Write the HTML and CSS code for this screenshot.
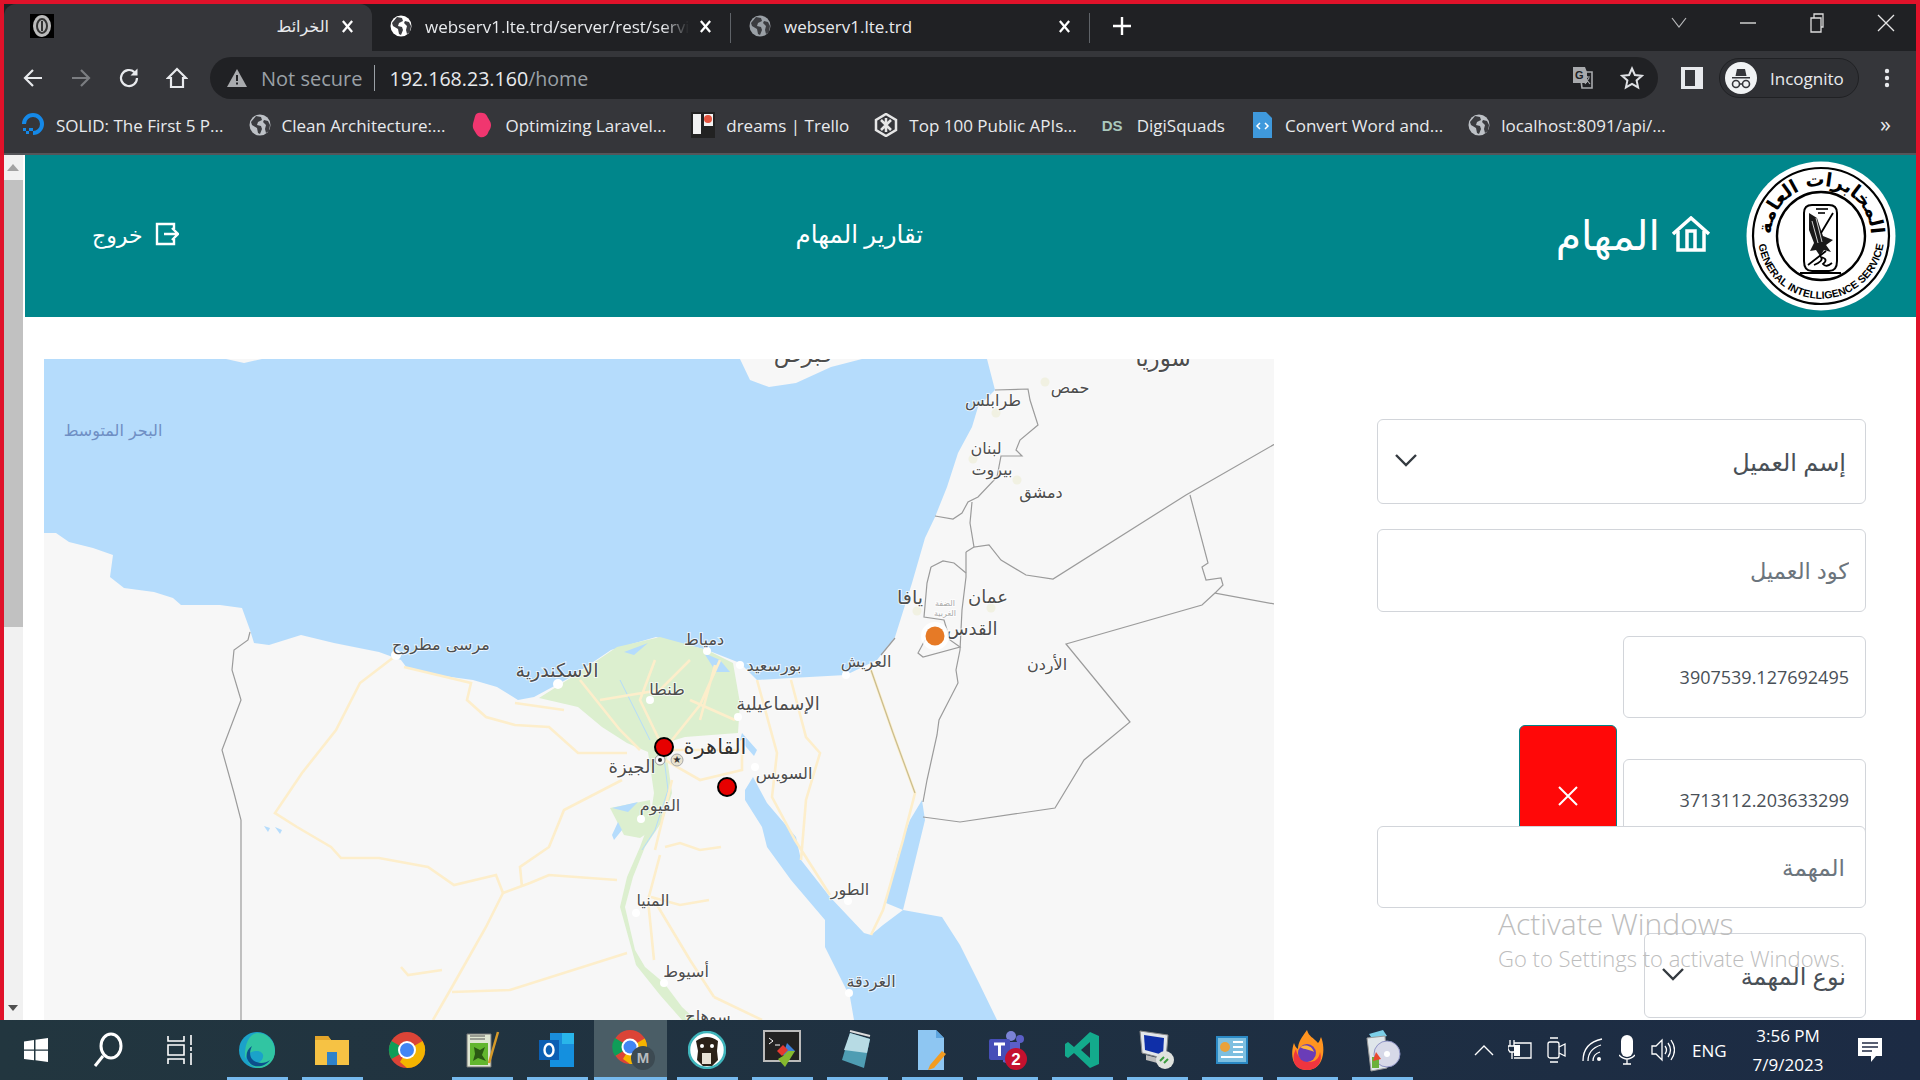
FILE: index.html
```html
<!DOCTYPE html>
<html lang="ar">
<head>
    <meta charset="utf-8">
    <title>الخرائط</title>
    <link rel="stylesheet" href="styles.css">
</head>
<body>
<svg class="defs" width="0" height="0">
    <symbol id="globe" viewBox="0 0 22 22">
        <circle cx="11" cy="11" r="10.5" fill="currentColor"/>
        <path d="M7 2l5 1 1 3-4 2-1 3 4 1 1 3-2 5-2-1-1-5-5-3-1-3zM15 6l4 1 2 4-1 6-3 2-1-4 1-4-3-3z" fill="#3b3c40"/>
    </symbol>
</svg>

<div class="tabstrip">
    <div class="tab active">
        <div class="tab-fav">
            <svg width="24" height="24" viewBox="0 0 24 24"><rect width="24" height="24" fill="#000"/><ellipse cx="12" cy="12" rx="9" ry="11" fill="#bbb"/><ellipse cx="12" cy="12" rx="5" ry="7" fill="none" stroke="#333" stroke-width="2"/><path d="M12 7v10" stroke="#333" stroke-width="2"/></svg>
        </div>
        <span class="tab-title rtl">الخرائط</span>
        <svg class="tab-x" viewBox="0 0 14 14"><path d="M2 1l10 12M12 1L2 13"/></svg>
    </div>
    <div class="tab">
        <svg class="tab-globe white"><use href="#globe"/></svg>
        <span class="tab-title fade">webserv1.lte.trd/server/rest/service</span>
        <svg class="tab-x" viewBox="0 0 14 14"><path d="M2 1l10 12M12 1L2 13"/></svg>
    </div>
    <div class="tab-sep"></div>
    <div class="tab">
        <svg class="tab-globe"><use href="#globe"/></svg>
        <span class="tab-title">webserv1.lte.trd</span>
        <svg class="tab-x" viewBox="0 0 14 14"><path d="M2 1l10 12M12 1L2 13"/></svg>
    </div>
    <div class="tab-sep"></div>
    <svg class="newtab" width="20" height="20" viewBox="0 0 20 20"><path d="M10 1v18M1 10h18" stroke="#fff" stroke-width="2.4"/></svg>
    <div class="winctrls">
        <svg width="18" height="12" viewBox="0 0 18 12"><path d="M2 1l7 9 7-9" fill="none" stroke="#b8b9bb" stroke-width="1.2"/></svg>
        <svg width="18" height="12" viewBox="0 0 18 12"><path d="M1 6h16" stroke="#dcdcdc" stroke-width="1.4"/></svg>
        <svg width="18" height="20" viewBox="0 0 18 20"><path d="M3 5h10v14H3zM6 5V1h9v13h-2" fill="none" stroke="#dcdcdc" stroke-width="1.3"/></svg>
        <svg width="18" height="18" viewBox="0 0 18 18"><path d="M1 1l16 16M17 1L1 17" stroke="#e6e6e6" stroke-width="1.3"/></svg>
    </div>
</div>

<div class="toolbar">
    <div class="navbtn"><svg width="22" height="22" viewBox="0 0 22 22"><path d="M20 11H3M11 3l-8 8 8 8" fill="none" stroke="#e8eaed" stroke-width="2.2"/></svg></div>
    <div class="navbtn"><svg width="22" height="22" viewBox="0 0 22 22"><path d="M2 11h17M11 3l8 8-8 8" fill="none" stroke="#7b7d81" stroke-width="2.2"/></svg></div>
    <div class="navbtn"><svg width="24" height="24" viewBox="0 0 24 24"><path d="M20 12a8 8 0 1 1-2.6-5.9" fill="none" stroke="#e8eaed" stroke-width="2.2"/><path d="M20.5 2.5v7h-7z" fill="#e8eaed"/></svg></div>
    <div class="navbtn"><svg width="22" height="24" viewBox="0 0 22 24"><path d="M11 3L2 12h3v9h12v-9h3z" fill="none" stroke="#e8eaed" stroke-width="2.2"/></svg></div>
    <div class="omnibox">
        <svg class="warn" width="20" height="18" viewBox="0 0 20 18"><path d="M10 0l10 18H0z" fill="#a9abae"/><path d="M9 6h2v6H9zM9 13.500h2v2H9z" fill="#202124"/></svg>
        <span class="notsecure">Not secure</span>
        <span class="omni-sep"></span>
        <span class="url">192.168.23.160<span class="url-path">/home</span></span>
        <svg class="translate" width="24" height="24" viewBox="0 0 24 24"><path d="M2 1h12l2 5v11H2z" fill="#a8aaad"/><path d="M9 6h12v16H11z" fill="none" stroke="#a8aaad" stroke-width="1.6"/><text x="4" y="13" class="gtext">G</text><path d="M13 11h6M16 10v2M14 18l4-6M15 13l4 5" stroke="#a8aaad" stroke-width="1.2" fill="none"/></svg>
        <svg class="star" width="24" height="24" viewBox="0 0 24 24"><path d="M12 2.500l2.900 6.500 7 .7-5.300 4.700 1.500 7-6.100-3.600-6.100 3.600 1.500-7-5.300-4.700 7-.7z" fill="none" stroke="#dfe1e5" stroke-width="2"/></svg>
    </div>
    <svg class="panel" width="22" height="22" viewBox="0 0 22 22"><rect width="22" height="22" fill="#e8eaed"/><rect x="4" y="3" width="10" height="16" fill="#35363a"/></svg>
    <div class="incognito">
        <svg width="32" height="32" viewBox="0 0 32 32"><circle cx="16" cy="16" r="16" fill="#f1f3f4"/><path d="M7 15h18v1.500H7zM10.500 14l1.500-7h8l1.500 7z" fill="#35363a"/><circle cx="11" cy="22" r="3.500" fill="none" stroke="#35363a" stroke-width="1.600"/><circle cx="21" cy="22" r="3.500" fill="none" stroke="#35363a" stroke-width="1.600"/><path d="M14.500 22h3" stroke="#35363a" stroke-width="1.500"/></svg>
        <span>Incognito</span>
    </div>
    <svg class="dots" width="6" height="20" viewBox="0 0 6 20"><circle cx="3" cy="3" r="2.200" fill="#e8eaed"/><circle cx="3" cy="10" r="2.200" fill="#e8eaed"/><circle cx="3" cy="17" r="2.200" fill="#e8eaed"/></svg>
</div>

<div class="bookmarks">
    <div class="bm"><svg width="24" height="24" viewBox="0 0 24 24"><path d="M12 22v-4a7 7 0 1 0-7-7H1a11 11 0 1 1 11 11z" fill="#1589e8"/><path d="M8 15h4v3H8zM5 18h3v3H5zM2 15h3v3H2z" fill="#1589e8"/></svg><span>SOLID: The First 5 P...</span></div>
    <div class="bm"><svg class="bm-globe"><use href="#globe"/></svg><span>Clean Architecture:...</span></div>
    <div class="bm"><svg width="24" height="26" viewBox="0 0 24 26"><path d="M8 1c4-1 8 0 9 3s4 5 4 9-2 5-3 8-5 5-8 4-4-4-6-7-1-7 0-10 1-6 4-7z" fill="#f0366f"/></svg><span>Optimizing Laravel...</span></div>
    <div class="bm"><svg width="24" height="26" viewBox="0 0 24 26"><rect width="24" height="26" fill="#222"/><rect x="2" y="2" width="8" height="20" fill="#f2f2f2"/><rect x="13" y="2" width="9" height="12" fill="#f2f2f2"/><circle cx="17" cy="7" r="4" fill="#e3543f"/></svg><span>dreams | Trello</span></div>
    <div class="bm"><svg width="24" height="24" viewBox="0 0 24 24"><path d="M12 1l10 6v10l-10 6L2 17V7z" fill="none" stroke="#e6e6e6" stroke-width="2.500"/><path d="M7 7l10 10M17 7L7 17M12 5v14" stroke="#e6e6e6" stroke-width="2.500"/></svg><span>Top 100 Public APIs...</span></div>
    <div class="bm"><span class="ds">DS</span><span>DigiSquads</span></div>
    <div class="bm"><svg width="24" height="26" viewBox="0 0 24 26"><path d="M3 0h13l6 6v20H3z" fill="#3f99dc"/><path d="M10 11l-3 3 3 3M15 11l3 3-3 3" fill="none" stroke="#fff" stroke-width="1.500"/></svg><span>Convert Word and...</span></div>
    <div class="bm"><svg class="bm-globe"><use href="#globe"/></svg><span>localhost:8091/api/...</span></div>
    <span class="bm-more">»</span>
</div>

<div class="page">
    <div class="scrollbar">
        <div class="scroll-up"></div>
        <div class="scroll-thumb"></div>
        <div class="scroll-down"></div>
    </div>
    <div class="content">
        <header class="topnav">
            <a class="logout"><span>خروج</span>
                <svg width="24" height="24" viewBox="0 0 24 24"><path d="M19 7V2H2v20h17v-5M9 12h14M17 6l6 6-6 6" fill="none" stroke="#fff" stroke-width="2.400"/></svg>
            </a>
            <a class="reports">تقارير المهام</a>
            <a class="tasks"><span>المهام</span>
                <svg width="38" height="36" viewBox="0 0 38 36"><path d="M1 18L19 2l18 16" fill="none" stroke="#fff" stroke-width="3.500"/><path d="M6 15v19h26V15M15 34V15h8v19" fill="none" stroke="#fff" stroke-width="3.500"/></svg>
            </a>
            <svg class="logo" width="150" height="150" viewBox="0 0 150 150">
                <defs>
                    <path id="arcbottom" d="M14.100 58.700A63 63 0 1 0 135.900 58.700"/>
                    <path id="arctop" d="M28 92A50 50 0 1 1 122 92"/>
                </defs>
                <circle cx="75" cy="75" r="74.500" fill="#fff"/>
                <circle cx="75" cy="75" r="68" fill="none" stroke="#000" stroke-width="2.200"/>
                <circle cx="75" cy="75" r="44" fill="none" stroke="#000" stroke-width="2.400"/>
                <text class="logo-en"><textPath href="#arcbottom" startOffset="50%" text-anchor="middle">GENERAL INTELLIGENCE SERVICE</textPath></text>
                <text class="logo-ar" direction="rtl"><textPath href="#arctop" startOffset="50%" text-anchor="middle">المخابرات العامة</textPath></text>
                <path d="M58 52q0-8 8-8h17q8 0 8 8v48q0 10-8 10H66q-8 0-8-10z" fill="#fff" stroke="#000" stroke-width="2"/>
                <path d="M54 112h41" stroke="#000" stroke-width="2"/>
                <path d="M63 52l8 5 6 18 10 4-7 5 5 7-7-2-4 6-4-6-6 1 4-8-5-13z" fill="#1a1a1a"/>
                <path d="M66 60l6 22M70 57l6 24" stroke="#fff" stroke-width=".8"/>
                <path d="M87 52L75 72M62 104l18-14" stroke="#000" stroke-width="1.800"/>
                <path d="M70 48h12M72 52h7" stroke="#333" stroke-width="2"/>
                <path d="M68 104q10-4 7-8 8 2 2 7 3 4 9-1" fill="none" stroke="#000" stroke-width="1.800"/>
            </svg>
        </header>

        <main class="body-row">
            <div class="map">
                <svg width="1230" height="661" viewBox="44 359 1230 661">
                    <rect x="44" y="359" width="1230" height="661" fill="#f7f7f7"/>
                    <!-- sea -->
                    <path class="water" d="M44 359H226L244 363 262 359H740L750 380 769 387 796 383 831 367 862 359H987L995 390 978 407 972 427 958 453 947 487 935 517 925 538 912 583 895 637 877 660 846 675 791 678 757 680 740 663 707 650 656 637 611 650 571 677 534 697 518 700 497 687 473 680 436 675 407 668 401 660 379 652 334 643 301 635 269 645 254 643 250 630 242 608 220 605 181 605 173 598 154 592 124 588 110 577 113 555 93 548 69 542 56 533 44 533Z"/>
                    <path class="water" d="M753 777L745 790 745 800 762 827 767 847 791 880 825 920 825 947 850 997 854 1020H997L980 985 960 945 942 917 903 910 886 903 898 853 910 820 922 800 925 820 917 853 903 910 883 925 871 935 864 933 830 897 801 860 796 837 767 803Z"/>
                    <!-- delta and nile -->
                    <path class="green" d="M539 698L583 670 617 647 660 637 707 650 733 663 740 703 738 733 685 737 665 743 672 793 663 820 645 847 633 877 625 907 635 950 645 967 664 983 682 1007 696 1020H682L660 995 636 965 620 907 627 877 640 847 650 820 654 793 648 752 627 743 602 727 578 707Z"/>
                    <path class="green" d="M610 808L650 800 652 830 640 838 624 835Z"/>
                    <path class="water" d="M612 808L638 802 628 812ZM612 835L618 822 622 830 614 840ZM624 652L648 643 634 655ZM704 653L720 660 730 672 716 672ZM742 733L757 750 754 756 740 740ZM264 826L270 828 268 832ZM275 827L282 830 280 834Z"/>
                    <path class="nile" d="M620 680L650 740M663 750L668 790 655 830 642 850"/>
                    <!-- roads -->
                    <g class="roads">
                        <path d="M394 657L360 683 336 730 302 773 275 813 297 827 331 847 341 858 379 858 428 867 454 885 496 875 503 893 530 883 549 875 617 880"/>
                        <path d="M404 667L471 683 467 700 486 717 515 725 549 727 578 753 627 753"/>
                        <path d="M515 703L564 710M622 780L564 810 549 847 520 867 522 887"/>
                        <path d="M503 893L486 927 452 987 433 1020M452 992L510 990 627 953M401 967L408 975 442 970"/>
                        <path d="M665 847L680 843 700 850 721 847M651 897L680 905 709 900"/>
                        <path d="M871 670L898 747 915 793 903 840 883 910 871 935M791 680L806 737 820 753 806 800 801 860M757 680L777 753 772 797 795 840 830 895"/>
                        <path d="M714 997L762 1020M654 900L690 960 714 997M660 855L648 900 654 960M672 780L655 850"/>
                        <path d="M664 750L640 700 655 660M664 750L700 705 720 660M580 680L620 730 640 750M665 760L700 780 742 770 742 740M690 700L735 720M665 750H740M600 700L660 690 690 660M715 665L700 720"/>
                    </g>
                    <!-- borders -->
                    <g class="borders">
                        <path d="M995 390L1028 389 1030 400 1038 425 1020 440 1016 450 1022 456 1001 456 997 477 978 497 968 502 962 513 953 519 935 516"/>
                        <path d="M972 502L970 523 974 547 989 545 1001 560 1026 575 1053 579 1186 495 1280 441"/>
                        <path d="M1190 495L1208 563 1202 567 1206 580 1221 578 1223 585 1215 593 1280 605"/>
                        <path d="M1215 593L1202 605 1066 644 1130 722 1084 760 1055 808 960 822 923 817"/>
                        <path d="M966 552L966 577 962 610 960 650 956 670 958 683 939 720 937 735 927 780 923 802"/>
                        <path d="M966 552L974 547M931 567L943 561 954 563 966 573M931 567L927 583 924 617 944 620 950 640 960 647 923 657 918 653 925 640"/>
                        <path d="M895 638L881 655"/>
                        <path d="M250 632L248 640 234 650 232 670 241 700 222 750 234 793 241 820V1020"/>
                    </g>
                    <path class="sinai" d="M871 670L893 733 915 793"/>
                    <!-- cities -->
                    <g class="dots-city">
                        <circle cx="396" cy="655" r="5"/><circle cx="558" cy="684" r="5"/><circle cx="650" cy="700" r="4"/><circle cx="707" cy="651" r="4"/><circle cx="740" cy="665" r="4"/><circle cx="846" cy="675" r="4"/><circle cx="738" cy="717" r="4"/><circle cx="755" cy="767" r="4"/><circle cx="641" cy="819" r="4"/><circle cx="636" cy="913" r="4"/><circle cx="664" cy="983" r="4"/><circle cx="848" cy="901" r="4"/><circle cx="849" cy="993" r="4"/>
                    </g>
                    <g class="dots-far">
                        <circle cx="1045" cy="382" r="4.500"/><circle cx="996" cy="413" r="4.500"/><circle cx="973" cy="459" r="4.500"/><circle cx="1017" cy="480" r="4.500"/><circle cx="991" cy="608" r="4.500"/><circle cx="917" cy="611" r="4.500"/>
                    </g>
                    <circle cx="660" cy="760" r="5" fill="#f7f7f7" stroke="#999"/><circle cx="660" cy="760" r="2" fill="#222"/>
                    <circle cx="677" cy="760" r="6" fill="#e8e2cf" stroke="#aaa"/><text x="677" y="763" class="star-cap">★</text>
                    <!-- labels -->
                    <g class="labels" direction="rtl">
                        <text x="113" y="436" class="sea-label">البحر المتوسط</text>
                        <text x="441" y="650">مرسى مطروح</text>
                        <text x="557" y="677" class="large">الاسكندرية</text>
                        <text x="667" y="695">طنطا</text>
                        <text x="704" y="645">دمياط</text>
                        <text x="774" y="671">بورسعيد</text>
                        <text x="866" y="667">العريش</text>
                        <text x="778" y="710" class="big">الإسماعيلية</text>
                        <text x="715" y="754" class="huge">القاهرة</text>
                        <text x="632" y="773" class="big">الجيزة</text>
                        <text x="784" y="779">السويس</text>
                        <text x="660" y="811">الفيوم</text>
                        <text x="653" y="906">المنيا</text>
                        <text x="686" y="977">أسيوط</text>
                        <text x="850" y="895">الطور</text>
                        <text x="871" y="987">الغردقة</text>
                        <text x="708" y="1022">سوهاج</text>
                        <text x="972" y="635" class="big">القدس</text>
                        <text x="988" y="603" class="big">عمان</text>
                        <text x="910" y="604" class="large">يافا</text>
                        <text x="945" y="606" class="tiny">الضفة</text>
                        <text x="945" y="616" class="tiny">الغربية</text>
                        <text x="1047" y="670">الأردن</text>
                        <text x="1041" y="498">دمشق</text>
                        <text x="992" y="475">بيروت</text>
                        <text x="986" y="454">لبنان</text>
                        <text x="993" y="406">طرابلس</text>
                        <text x="1070" y="393">حمص</text>
                        <text x="1163" y="366" class="xlarge">سوريا</text>
                        <text x="803" y="362" class="xlarge">قبرص</text>
                    </g>
                    <!-- markers -->
                    <circle cx="664" cy="747" r="9" class="pin"/>
                    <circle cx="727" cy="787" r="9" class="pin"/>
                    <circle cx="935" cy="636" r="14" fill="#fff" fill-opacity=".85"/>
                    <circle cx="935" cy="636" r="9.500" fill="#e67a26"/>
                </svg>
            </div>

            <form class="form">
                <div class="field select"><svg width="22" height="14" viewBox="0 0 22 14"><path d="M1 2l10 10L21 2" fill="none" stroke="#343a40" stroke-width="2.400"/></svg><span>إسم العميل</span></div>
                <input class="field code" type="text" placeholder="كود العميل">
                <input class="field coord" type="text" value="3907539.127692495">
                <div class="coord-row">
                    <button type="button" class="remove"><svg width="20" height="20" viewBox="0 0 20 20"><path d="M1 1l18 18M19 1L1 19" stroke="#fff" stroke-width="2"/></svg></button>
                    <input class="field coord second" type="text" value="3713112.203633299">
                </div>
                <input class="field task" type="text" placeholder="المهمة">
                <div class="field select short"><svg width="22" height="14" viewBox="0 0 22 14"><path d="M1 2l10 10L21 2" fill="none" stroke="#343a40" stroke-width="2.400"/></svg><span>نوع المهمة</span></div>
            </form>
        </main>

        <div class="activate">
            <div class="activate-1">Activate Windows</div>
            <div class="activate-2">Go to Settings to activate Windows.</div>
        </div>
    </div>
</div>

<footer class="taskbar">
    <div class="sys"><svg width="24" height="24" viewBox="0 0 24 24"><path d="M0 3.500l10-1.500v9.500H0zM11.500 1.800L24 0v11.500H11.500zM0 12.800h10v9.500L0 21zM11.500 12.800H24V24l-12.500-1.800z" fill="#fff"/></svg></div>
    <div class="sys"><svg width="34" height="36" viewBox="0 0 34 36"><ellipse cx="20" cy="14" rx="10" ry="12" fill="none" stroke="#fff" stroke-width="3"/><path d="M12 24L4 34" stroke="#fff" stroke-width="3"/></svg></div>
    <div class="sys"><svg width="28" height="30" viewBox="0 0 28 30"><path d="M2 1v5h16V1M2 29v-5h16v5M2 10h16v10H2zM25 0v10M25 12v4M25 18v12" fill="none" stroke="#fff" stroke-width="1.600"/></svg></div>
    <div class="apps">
        <div class="app on"><svg width="38" height="38" viewBox="0 0 38 38"><circle cx="19" cy="19" r="18" fill="#1ba2c9"/><path d="M37 20c0 10-8 17-16 17-5 0-9-3-11-6 6 3 14 1 15-5 1-3-2-6-6-6-6 0-10 3-12 8C6 12 12 2 20 2c10 0 17 9 17 18z" fill="#31c5a2"/><path d="M14 28c4 5 13 5 18 1-5 7-16 9-21 2-4-5-3-12 3-16-2 4-3 9 0 13z" fill="#0c4f8c"/></svg></div>
        <div class="app on"><svg width="36" height="34" viewBox="0 0 36 34"><path d="M1 3h13l3 4h18v25H1z" fill="#f6c244"/><path d="M1 3h13l3 4H1z" fill="#e3a52a"/><path d="M13 19h10v13H13z" fill="#2f82c9"/></svg></div>
        <div class="app"><svg width="38" height="38" viewBox="0 0 38 38"><circle cx="19" cy="19" r="18" fill="#db4437"/><path d="M19 19L3.400 28A18 18 0 0 1 3.400 10z" fill="#0f9d58"/><path d="M19 37a18 18 0 0 0 15.600-27L19 19l-7 12z" fill="#f4b400"/><circle cx="19" cy="19" r="9" fill="#fff"/><circle cx="19" cy="19" r="7" fill="#4285f4"/></svg></div>
        <div class="app on"><svg width="36" height="38" viewBox="0 0 36 38"><path d="M3 3h24v33H3z" fill="#dfe6d2" stroke="#777"/><path d="M6 12h18v22H6z" fill="#62b62e"/><path d="M10 16l6 3 5-3-3 8 4 6-8-3-5 3 2-7z" fill="#2a5913"/><path d="M6 5h15M6 8h15" stroke="#555"/><path d="M34 1L25 32" stroke="#d69a29" stroke-width="2.500"/></svg></div>
        <div class="app on"><svg width="38" height="36" viewBox="0 0 38 36"><rect x="12" y="1" width="24" height="34" fill="#1a8ddb"/><path d="M24 1h12v11H24z" fill="#29b5ea"/><path d="M12 18h24v17H12z" fill="#1490df"/><rect x="1" y="8" width="20" height="20" fill="#0b5fb3"/><ellipse cx="11" cy="18" rx="4.500" ry="6" fill="none" stroke="#fff" stroke-width="2.400"/></svg></div>
        <div class="app active"><svg width="44" height="44" viewBox="0 0 44 44"><circle cx="19" cy="19" r="17" fill="#db4437"/><path d="M19 19L4 28A17 17 0 0 1 4 10z" fill="#0f9d58"/><path d="M19 36a17 17 0 0 0 14.700-25.500L19 19l-7 12z" fill="#f4b400"/><circle cx="19" cy="19" r="8.500" fill="#fff"/><circle cx="19" cy="19" r="6.500" fill="#4285f4"/><circle cx="32" cy="30" r="12" fill="#3c4a52"/><text x="32" y="35" class="m-badge">M</text></svg></div>
        <div class="app on"><svg width="38" height="38" viewBox="0 0 38 38"><circle cx="19" cy="19" r="18" fill="#fff" stroke="#3fb4bb" stroke-width="2.500"/><path d="M8 10q11-8 22 0l-1 10 1 9-6 6h-9l-6-6 1-9z" fill="#2b2118"/><path d="M14 22h9v11h-9z" fill="#e8e2d6"/><circle cx="14" cy="15" r="2" fill="#fff"/><circle cx="24" cy="15" r="2" fill="#fff"/></svg></div>
        <div class="app on"><svg width="38" height="40" viewBox="0 0 38 40"><rect x="1" y="1" width="36" height="30" fill="#222" stroke="#bbb" stroke-width="2"/><path d="M6 8l4 3-4 3M12 15h5" stroke="#fff" fill="none"/><path d="M24 13l8 8-8 8-4-4z" fill="#3d7fd6"/><path d="M14 21l6-6 5 5-6 6z" fill="#e5392f"/><path d="M20 26l5-5 7 0-10 16-7-8z" fill="#86b92f"/></svg></div>
        <div class="app on"><svg width="34" height="40" viewBox="0 0 34 40"><path d="M10 3l20 6-6 29-22-8z" fill="#4f9db3"/><path d="M10 3l20 6-3 14L4 20z" fill="#b7dbe4"/><path d="M10 1l20 5" stroke="#ddd" stroke-width="2"/></svg></div>
        <div class="app on"><svg width="32" height="42" viewBox="0 0 32 42"><path d="M2 1h18l8 8v32H2z" fill="#8ec6f2"/><path d="M20 1l8 8h-8z" fill="#5da4de"/><path d="M14 36l12-14 4 3-12 14-6 2z" fill="#f39c21"/></svg></div>
        <div class="app on"><svg width="42" height="42" viewBox="0 0 42 42"><circle cx="25" cy="7" r="5" fill="#7b83d6"/><circle cx="34" cy="10" r="4" fill="#5b5fc7"/><path d="M17 13h17v18l-8 5-9-3z" fill="#5b5fc7"/><rect x="3" y="10" width="21" height="21" rx="2" fill="#464eb8"/><path d="M8 15h11M13.500 15v12" stroke="#fff" stroke-width="3"/><circle cx="30" cy="30" r="11" fill="#c4112f"/><text x="30" y="36" class="teams-badge">2</text></svg></div>
        <div class="app on"><svg width="36" height="38" viewBox="0 0 36 38"><path d="M26 1l9 4v28l-9 4-16-15-6 5-3-2V13l3-2 6 5zM26 11l-9 8 9 8z" fill="#13aa8c"/></svg></div>
        <div class="app on"><svg width="38" height="42" viewBox="0 0 38 42"><path d="M2 2l28 4-2 24L4 24z" fill="#e3e6ea" stroke="#888"/><path d="M6 6l20 3-1 17L7 21z" fill="#0f2fa8"/><path d="M8 26l20 5-1 5-19-5z" fill="#bbb"/><circle cx="27" cy="31" r="9" fill="#dfe2de"/><path d="M22 32l4-4M26 34l4-4" stroke="#3b9c3e" stroke-width="2"/></svg></div>
        <div class="app on"><svg width="32" height="28" viewBox="0 0 32 28"><rect x="1" y="1" width="30" height="26" fill="#7dbfe0" stroke="#2b89c4" stroke-width="2"/><circle cx="9" cy="11" r="5" fill="#e9a23b"/><path d="M17 6h10M17 11h10M17 16h10M5 21h22" stroke="#fff" stroke-width="2"/></svg></div>
        <div class="app on"><svg width="38" height="42" viewBox="0 0 38 42"><path d="M19 1c2 7 6 7 11 13 2-2 2-4 3-6 5 12 3 33-14 33C4 41 2 25 6 14c1 3 2 5 4 6 0-7 4-12 9-19z" fill="#ff9420"/><path d="M19 41C5 41 3 29 8 20c1 14 22 19 24 3 3 9-2 18-13 18z" fill="#f0353f"/><circle cx="19" cy="24" r="9" fill="#6a3db8"/><path d="M12 18c5-3 12-2 14 5-5-3-9-2-14-5z" fill="#ffb53d"/></svg></div>
        <div class="app on"><svg width="38" height="44" viewBox="0 0 38 44"><path d="M6 6l14-4 4 6-14 4z" fill="#7ccfe8"/><path d="M4 10l18-2 2 32-16 3z" fill="#dfe6ea" stroke="#999"/><circle cx="24" cy="26" r="13" fill="#d7d9e8" stroke="#8f94c6"/><circle cx="24" cy="26" r="3" fill="#fff"/><path d="M9 29h7v11H9z" fill="#6bb13a"/><path d="M13 24l5 7-8 2z" fill="#e9492f"/></svg></div>
    </div>
    <div class="tray">
        <svg class="t-chev" width="20" height="12" viewBox="0 0 20 12"><path d="M1 11l9-9 9 9" fill="none" stroke="#fff" stroke-width="1.400"/></svg>
        <svg class="t-batt" width="24" height="22" viewBox="0 0 24 22"><path d="M6 4h17v15H6" fill="none" stroke="#fff" stroke-width="1.300"/><path d="M6 6h6v11H6z" fill="#fff"/><path d="M2 1v6M6 1v6M0 7h8v3l-2 3H2L0 10zM4 13v7" stroke="#fff" fill="none" stroke-width="1.300"/></svg>
        <svg class="t-cam" width="20" height="26" viewBox="0 0 20 26"><rect x="2" y="5" width="11" height="16" rx="2" fill="none" stroke="#fff" stroke-width="1.300"/><path d="M13 10l6-3v12l-6-3M4 1h8M4 25h8" stroke="#fff" fill="none" stroke-width="1.300"/></svg>
        <svg class="t-wifi" width="22" height="24" viewBox="0 0 22 24"><path d="M1 23Q1 5 20 1M6 23Q6 11 19 7M11 23q0-7 7-9" fill="none" stroke="#fff" stroke-width="1.300"/><circle cx="17" cy="21" r="2" fill="#fff"/></svg>
        <svg class="t-mic" width="16" height="30" viewBox="0 0 16 30"><rect x="2" y="0" width="12" height="22" rx="6" fill="#fff"/><path d="M0 20q8 8 16 0M8 24v5M4 29h8" stroke="#fff" fill="none" stroke-width="1.300"/></svg>
        <svg class="t-vol" width="24" height="24" viewBox="0 0 24 24"><path d="M1 8h4l6-6v20l-6-6H1zM14 8q3 4 0 8M17 5q5 7 0 14M20 2q7 10 0 20" fill="none" stroke="#fff" stroke-width="1.300"/></svg>
        <span class="t-lang">ENG</span>
        <div class="t-clock"><span>3:56 PM</span><span>7/9/2023</span></div>
        <svg class="t-note" width="26" height="26" viewBox="0 0 26 26"><path d="M1 1h24v18h-6l-5 6v-6H1z" fill="#fff"/><path d="M5 6h16M5 10h16M5 14h10" stroke="#222b44" stroke-width="1.400"/></svg>
    </div>
</footer>
</body>
</html>
```

FILE: styles.css
```css
* {box-sizing: border-box;}
html, body {margin: 0; height: 100%;}
body {width: 1920px; height: 1080px; overflow: hidden; background: #e0122a; padding: 4px 4px 0; display: flex; flex-direction: column; font-family: "Open Sans", "DejaVu Sans", sans-serif; color: #e8eaed;}
.defs {position: absolute;}
.rtl {direction: rtl;}

/* browser chrome */
.tabstrip {height: 47px; background: #202124; display: flex; align-items: center; flex: none;}
.tab {width: 358px; height: 47px; display: flex; align-items: center; padding: 0 16px 3px 18px; color: #e8eaed; font-size: 17px; white-space: nowrap;}
.tab.active {width: 368px; background: #35363a; border-radius: 12px 12px 0 0; padding-left: 26px;}
.tab-fav {width: 24px; height: 24px;}
.tab-title {flex: 1; margin-left: 13px; overflow: hidden;}
.tab.active .tab-title {text-align: right; margin-right: 12px; font-size: 16px;}
.tab-title.fade {-webkit-mask-image: linear-gradient(to right, #000 90%, transparent 100%); mask-image: linear-gradient(to right, #000 90%, transparent 100%); margin-right: 10px;}
.tab-globe {width: 22px; height: 22px; color: #9aa0a6; flex: none;}
.tab-globe.white {color: #fff;}
.tab-x {width: 13px; height: 13px; flex: none; margin-right: 2px; stroke: #fff; stroke-width: 2.4; fill: none;}
.tab-sep {width: 1px; height: 30px; background: #5f6368; flex: none;}
.newtab {margin-left: 22px; margin-bottom: 3px;}
.winctrls {margin-left: auto; display: flex; justify-content: flex-end; gap: 51px; align-items: center; height: 36px; padding-right: 21px; margin-top: -10px;}

.toolbar {height: 50px; background: #35363a; display: flex; align-items: center; padding-left: 5px; flex: none; padding-top: 4px;}
.navbtn {width: 48px; display: flex; justify-content: center;}
.omnibox {margin-left: 9px; width: 1448px; height: 42px; background: #202124; border-radius: 21px; display: flex; align-items: center; padding-left: 17px; font-size: 20px;}
.notsecure {margin-left: 14px; color: #9aa0a6;}
.omni-sep {width: 1px; height: 26px; background: #9aa0a6; margin: 0 14px 0 12px;}
.url {color: #e8eaed; font-size: 19.6px;}
.url-path {color: #9aa0a6;}
.translate {margin-left: auto;}
.gtext {font: bold 11px "Liberation Sans", sans-serif; fill: #202124;}
.star {margin-left: 25px; margin-right: 14px;}
.panel {margin-left: 23px;}
.incognito {margin-left: 16px; width: 140px; height: 40px; border-radius: 20px; border: 1px solid #202124; display: flex; align-items: center; padding-left: 5px; gap: 13px; font-size: 17px; background: #2f3034;}
.dots {margin-left: 25px;}

.bookmarks {height: 54px; background: #35363a; border-bottom: 2px solid #55565a; display: flex; align-items: center; padding-left: 17px; padding-bottom: 4px; gap: 25px; font-size: 17px; flex: none; white-space: nowrap;}
.bm {display: flex; align-items: center; gap: 11px;}
.bm-globe {width: 22px; height: 22px; color: #bdc1c6;}
.ds {font: bold 15px "Liberation Sans", sans-serif; color: #a9c8bd; width: 24px;}
.bm-more {margin-left: auto; margin-right: 25px; font-size: 22px; margin-top: -4px;}

/* page */
.page {flex: 1; display: flex; background: #fff; min-height: 0;}
.scrollbar {width: 19px; background: #f1f1f1; margin-right: 2px; display: flex; flex-direction: column; flex: none;}
.scroll-up {height: 25px; position: relative;}
.scroll-up:after {content: ""; position: absolute; left: 3px; top: 9px; border: 6px solid transparent; border-top: 0; border-bottom: 7px solid #a3a3a3;}
.scroll-thumb {height: 447px; background: #c1c1c1; margin-left: 0;}
.scroll-down {margin-top: auto; height: 20px; position: relative;}
.scroll-down:after {content: ""; position: absolute; left: 4px; top: 5px; border: 5px solid transparent; border-bottom: 0; border-top: 6px solid #505050;}
.content {flex: 1; position: relative; overflow: hidden; display: flex; flex-direction: column;}

.topnav {height: 162px; background: #00868b; display: flex; align-items: center; color: #fff; flex: none; padding-left: 67px; padding-right: 20px;}
.topnav a {display: flex; align-items: center; margin-bottom: 5px;}
.logout {gap: 12px; font-size: 22px;}
.reports {font-size: 24.5px; margin-left: 617px;}
.tasks {margin-left: auto; margin-right: 36px; gap: 12px; font-size: 41px;}
.logo {flex: none;}
.logo-en {font: bold 10.5px "Liberation Sans", sans-serif; fill: #000;}
.logo-ar {font: bold 19px "DejaVu Sans", sans-serif; fill: #000;}

.body-row {display: flex; justify-content: space-between; padding: 42px 50px 0 19px; flex: 1; overflow: hidden;}
.map {width: 1230px; height: 661px; flex: none;}
.map svg {display: block;}
.water {fill: #b5dcfc;}
.green {fill: #dcefcf;}
.nile {fill: none; stroke: #b5dcfc; stroke-width: 1;}
.roads path {fill: none; stroke: #fdeecb; stroke-width: 2.6;}
.borders path {fill: none; stroke: #9b9b9b; stroke-width: 1.2;}
.sinai {fill: none; stroke: #c8bd8f; stroke-width: 1.2;}
.dots-city circle {fill: #fff;}
.dots-far circle {fill: #f1f1e2;}
.labels text {font-family: "DejaVu Sans", sans-serif; font-size: 16px; fill: #4d4d4d; text-anchor: middle; paint-order: stroke; stroke: rgba(255, 255, 255, .7); stroke-width: 2px;}
.labels .big {font-size: 18px;}
.labels .large {font-size: 19px;}
.labels .xlarge {font-size: 23px;}
.labels .huge {font-size: 21px; fill: #333;}
.labels .tiny {font-size: 8px; fill: #aaa;}
.labels .sea-label {font-size: 16px; fill: #6f8fc4; stroke: none;}
.star-cap {font: 10px "DejaVu Sans", sans-serif; fill: #333; text-anchor: middle;}
.pin {fill: #e60000; stroke: #000; stroke-width: 2;}

.form {width: 489px; flex: none; display: flex; flex-direction: column; align-items: flex-end; padding-top: 60px; overflow: visible;}
.field {display: block; width: 489px; background: #fff; border: 1px solid #d2d5da; border-radius: 6px; outline: none; font-family: "Open Sans", "DejaVu Sans", sans-serif; text-align: right; direction: rtl; padding: 0 13px 0 13px; color: #495057;}
.field::placeholder {color: #6c757d; opacity: 1;}
.select {height: 85px; display: flex; align-items: center; justify-content: space-between; direction: ltr; font-size: 24px; padding: 0 19px 0 17px;}
.select svg {margin-top: -4px;}
.code {height: 83px; margin-top: 25px; font-size: 22.5px; padding-right: 16px;}
.coord {width: 243px; height: 82px; margin-top: 24px; font-size: 18px; padding-right: 16px;}
.coord-row {display: flex; align-items: flex-start; gap: 6px; height: 101px; margin-top: 7px;}
.coord.second {margin-top: 34px; height: 82px;}
.remove {width: 98px; height: 110px; background: #ff0808; border: 1px solid #008489; border-radius: 6px; padding: 0; display: flex; align-items: flex-start; justify-content: center; padding-top: 60px;}
.task {position: relative; height: 82px; font-size: 23px; padding-right: 20px;}
.short {width: 222px; margin-top: 25px; padding-right: 19px; padding-left: 17px;}

.activate {position: absolute; left: 1473px; top: 750px; color: #bdbdbd; pointer-events: none; font-weight: 300;}
.activate-1 {font-size: 30px; line-height: 38px;}
.activate-2 {font-size: 22px; line-height: 30px;}

/* windows taskbar */
.taskbar {height: 60px; margin: 0 -4px; background: linear-gradient(to right, #22363f, #1c2b44); display: flex; align-items: center; color: #fff; flex: none;}
.sys {width: 72px; height: 60px; display: flex; align-items: center; justify-content: center;}
.apps {display: flex; margin-left: 3px;}
.app {width: 75px; height: 60px; display: flex; align-items: center; justify-content: center; position: relative; flex: none;}
.app.on:after {content: ""; position: absolute; left: 8px; right: 6px; bottom: 0; height: 3px; background: #76b9ed;}
.app.active {background: #4a5d66; width: 73px; margin-right: 2px;}
.app.active svg {margin-left: 5px;}
.app.active:after {content: ""; position: absolute; left: 0; right: 0; bottom: 0; height: 3px; background: #76b9ed;}
.m-badge {font: bold 15px "Liberation Sans", sans-serif; fill: #b7bcbf; text-anchor: middle;}
.teams-badge {font: bold 17px "Liberation Sans", sans-serif; fill: #fff; text-anchor: middle;}
.tray {margin-left: auto; display: flex; align-items: center; height: 60px; padding-right: 37px;}
.t-batt {margin-left: 14px;}
.t-cam {margin-left: 14px;}
.t-wifi {margin-left: 16px;}
.t-mic {margin-left: 15px;}
.t-vol {margin-left: 16px;}
.t-lang {margin-left: 17px; font-size: 17px; width: 36px; white-space: nowrap;}
.t-clock {display: flex; flex-direction: column; align-items: center; gap: 6px; font-size: 17px; width: 120px;}
.t-note {margin-left: 9px;}
```
